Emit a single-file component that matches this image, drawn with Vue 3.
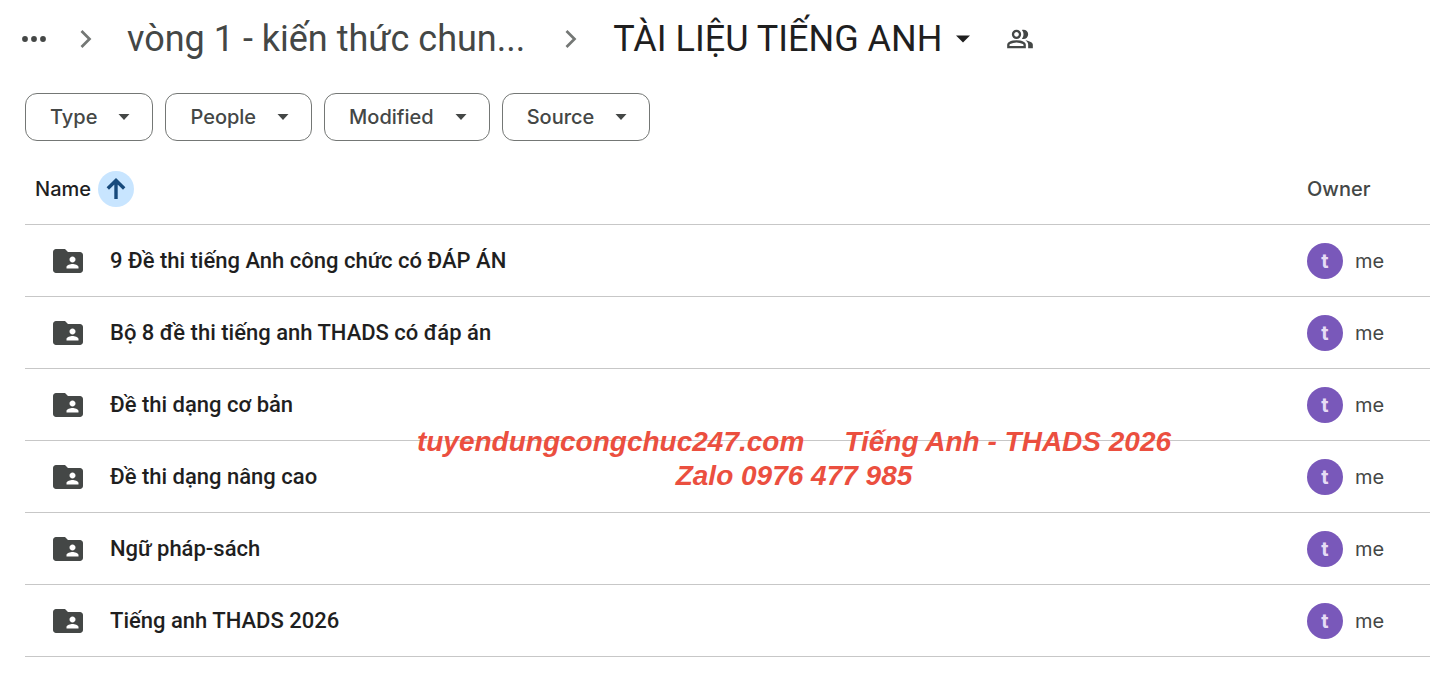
<script setup>
const filters = ['Type', 'People', 'Modified', 'Source']
const folders = [
  '9 Đề thi tiếng Anh công chức có ĐÁP ÁN',
  'Bộ 8 đề thi tiếng anh THADS có đáp án',
  'Đề thi dạng cơ bản',
  'Đề thi dạng nâng cao',
  'Ngữ pháp-sách',
  'Tiếng anh THADS 2026',
]
</script>

<template>
  <main class="drive">
    <nav class="crumbs" aria-label="Breadcrumb">
      <button class="plain more" type="button" aria-label="More">
        <svg width="26" height="6" viewBox="0 0 26 6"><circle cx="3" cy="3" r="2.9" /><circle cx="12" cy="3" r="2.9" /><circle cx="21" cy="3" r="2.9" /></svg>
      </button>
      <svg class="chevron" width="12" height="20" viewBox="0 0 12 20"><path d="M1.5 2l8 8-8 8" /></svg>
      <a class="crumb" href="#">vòng 1 - kiến thức chun...</a>
      <svg class="chevron" width="12" height="20" viewBox="0 0 12 20"><path d="M1.5 2l8 8-8 8" /></svg>
      <button class="plain current" type="button">
        <span>TÀI LIỆU TIẾNG ANH</span>
        <svg width="14" height="8" viewBox="0 0 14 8"><path d="M0 .5h14L7 7.5z" /></svg>
      </button>
      <button class="plain people" type="button" aria-label="Shared">
        <svg width="28" height="28" viewBox="0 -960 960 960"><path d="M40-160v-112q0-34 17.5-62.5T104-378q62-31 126-46.5T360-440q66 0 130 15.5T616-378q29 15 46.5 43.5T680-272v112H40Zm720 0v-120q0-44-24.5-84.5T666-434q51 6 96 20.5t84 35.5q36 20 55 44.5t19 53.5v120H760ZM360-480q-66 0-113-47t-47-113q0-66 47-113t113-47q66 0 113 47t47 113q0 66-47 113t-113 47Zm400-160q0 66-47 113t-113 47q-11 0-28-2.5t-28-5.5q27-32 41.5-71t14.5-81q0-42-14.5-81T544-792q14-5 28-6.5t28-1.5q66 0 113 47t47 113ZM120-240h480v-32q0-11-5.5-20T580-306q-54-27-109-40.5T360-360q-56 0-111 13.5T140-306q-9 5-14.5 14t-5.5 20v32Zm240-320q33 0 56.5-23.5T440-640q0-33-23.5-56.5T360-720q-33 0-56.5 23.5T280-640q0 33 23.5 56.5T360-560Z" /></svg>
      </button>
    </nav>

    <div class="filters">
      <button v-for="filter in filters" :key="filter" class="chip" type="button">
        {{ filter }}
        <svg width="12" height="6" viewBox="0 0 12 6"><path d="M.5 0h11L6 6z" /></svg>
      </button>
    </div>

    <section class="listing">
      <table>
        <thead>
          <tr>
            <th class="name-head" scope="col">
              <div class="sort">
                Name
                <button class="plain arrow" type="button" aria-label="Reverse sort direction">
                  <svg width="20" height="22" viewBox="0 0 20 22"><path d="M10 21V3M1.8 10.5L10 2.500l8.200 8" /></svg>
                </button>
              </div>
            </th>
            <th class="owner-col" scope="col">Owner</th>
          </tr>
        </thead>
        <tbody>
          <tr v-for="folder in folders" :key="folder">
            <td>
              <div class="file">
                <svg width="36" height="36" viewBox="0 0 24 24"><path d="M20 6h-8l-2-2H4c-1.1 0-1.99.9-1.99 2L2 18c0 1.1.9 2 2 2h16c1.1 0 2-.9 2-2V8c0-1.1-.9-2-2-2zm-5 3c1.1 0 2 .9 2 2s-.9 2-2 2-2-.9-2-2 .9-2 2-2zm4 8h-8v-1c0-1.33 2.67-2 4-2s4 .67 4 2v1z" /></svg>
                <span>{{ folder }}</span>
              </div>
            </td>
            <td class="owner-col">
              <div class="owner"><span class="avatar">t</span>me</div>
            </td>
          </tr>
        </tbody>
      </table>
      <p class="watermark">
        <span class="pair"><span>tuyendungcongchuc247.com</span><span>Tiếng Anh - THADS 2026</span></span>
        <span>Zalo 0976 477 985</span>
      </p>
    </section>
  </main>
</template>

<style>
body {
  margin: 0;
  background: #fff;
}
</style>

<style scoped>
.drive {
  font-family: Inter, Roboto, sans-serif;
  font-size: 20px;
  color: #444746;
}
svg {
  display: block;
  flex: none;
  fill: currentColor;
}
.plain {
  border: 0;
  padding: 0;
  background: none;
  color: inherit;
  font: inherit;
}
.crumbs {
  display: flex;
  align-items: center;
  height: 78px;
  padding-left: 22px;
  font-family: Roboto, sans-serif;
  font-size: 36px;
  white-space: nowrap;
}
.chevron {
  fill: none;
  stroke: #747775;
  stroke-width: 2.7;
}
.more {
  margin-right: 32px;
}
.crumb {
  margin: 0 40px 0 35px;
  color: inherit;
  text-decoration: none;
}
.current {
  display: flex;
  align-items: center;
  gap: 14px;
  margin-left: 36px;
  color: #1f1f1f;
}
.people {
  margin-left: 36px;
}
.filters {
  display: flex;
  gap: 12px;
  padding: 15px 25px 12px;
}
.chip {
  display: flex;
  align-items: center;
  gap: 21px;
  height: 48px;
  padding: 0 22px 0 24px;
  border: 1px solid #747775;
  border-radius: 12px;
  background: #fff;
  color: inherit;
  font: inherit;
  font-weight: 500;
}
.listing {
  position: relative;
  padding-left: 25px;
}
table {
  width: 100%;
  border-collapse: separate;
  border-spacing: 0;
}
th,
td {
  box-sizing: border-box;
  height: 72px;
  padding: 0;
  border-bottom: 1px solid #c7c7c7;
  text-align: left;
  font-weight: 500;
}
.name-head {
  padding-left: 10px;
  color: #1f1f1f;
}
.sort {
  display: flex;
  align-items: center;
  gap: 7px;
}
.arrow {
  display: flex;
  align-items: center;
  justify-content: center;
  width: 36px;
  height: 36px;
  border-radius: 50%;
  background: #c8e5ff;
  color: #174a7c;
}
.arrow svg {
  fill: none;
  stroke: currentColor;
  stroke-width: 3.4;
}
.owner-col {
  width: 123px;
}
.file {
  display: flex;
  align-items: center;
  gap: 24px;
  padding-left: 25px;
}
.file span {
  color: #1f1f1f;
  font-family: Roboto, sans-serif;
  font-size: 22px;
}
.owner {
  display: flex;
  align-items: center;
  gap: 12px;
  font-weight: 400;
}
.avatar {
  width: 36px;
  border-radius: 50%;
  background: #7958ba;
  color: #e6dcf5;
  font-weight: 700;
  line-height: 36px;
  text-align: center;
}
.watermark {
  position: absolute;
  top: 272px;
  left: 0;
  right: 0;
  display: flex;
  flex-direction: column;
  align-items: center;
  margin: 0;
  padding-left: 158px;
  color: #eb4f3f;
  font: italic bold 28px/34px "Liberation Sans", sans-serif;
  white-space: nowrap;
  pointer-events: none;
}
.pair {
  display: flex;
  gap: 40px;
}
</style>
